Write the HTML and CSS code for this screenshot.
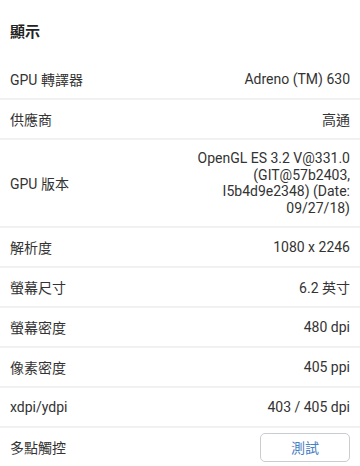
FILE: index.html
```html
<!DOCTYPE html>
<html lang="zh-Hant">
<head>
    <meta charset="UTF-8">
    <meta name="viewport" content="width=device-width, initial-scale=1.0">
    <title>顯示</title>
    <link rel="stylesheet" href="styles.css">
</head>
<body>
    <div class="section">
        <h2 class="section-title">顯示</h2>

        <div class="info-list">
            <div class="info-row">
                <span class="label">GPU 轉譯器</span>
                <span class="value">Adreno (TM) 630</span>
            </div>
            <div class="info-row">
                <span class="label">供應商</span>
                <span class="value">高通</span>
            </div>
            <div class="info-row tall">
                <span class="label">GPU 版本</span>
                <span class="value multiline">OpenGL ES 3.2 V@331.0 (GIT@57b2403, I5b4d9e2348) (Date: 09/27/18)</span>
            </div>
            <div class="info-row">
                <span class="label">解析度</span>
                <span class="value">1080 x 2246</span>
            </div>
            <div class="info-row">
                <span class="label">螢幕尺寸</span>
                <span class="value">6.2 英寸</span>
            </div>
            <div class="info-row">
                <span class="label">螢幕密度</span>
                <span class="value">480 dpi</span>
            </div>
            <div class="info-row">
                <span class="label">像素密度</span>
                <span class="value">405 ppi</span>
            </div>
            <div class="info-row">
                <span class="label">xdpi/ydpi</span>
                <span class="value">403 / 405 dpi</span>
            </div>
            <div class="info-row">
                <span class="label">多點觸控</span>
                <button class="test-button">測試</button>
            </div>
        </div>
    </div>
</body>
</html>
```

FILE: styles.css
```css
:root {
    --text-color: #333;
    --divider-color: #f1f1f1;
    --accent-color: #4a80c4;
}

body {
    font-family: Roboto, "Noto Sans CJK TC", sans-serif;
    margin: 0;
    padding: 0;
    background-color: #fff;
    color: var(--text-color);
}

.section-title {
    margin: 0;
    height: 60px;
    padding: 0 10px;
    display: flex;
    align-items: center;
    font-size: 15px;
    font-weight: bold;
    color: #222;
}

.info-row {
    display: flex;
    justify-content: space-between;
    align-items: center;
    height: 38px;
    padding: 0 10px;
    border-bottom: 2px solid var(--divider-color);
    font-size: 14px;
}

.info-row:last-child {
    border-bottom: none;
}

.info-row.tall {
    height: 86px;
}

.value {
    text-align: right;
}

.multiline {
    max-width: 156px;
    line-height: 16.5px;
}

.test-button {
    width: 90px;
    height: 29px;
    border: 1px solid #c9ccd0;
    border-radius: 5px;
    background: #fff;
    color: var(--accent-color);
    font-family: inherit;
    font-size: 14px;
    cursor: pointer;
}
```
